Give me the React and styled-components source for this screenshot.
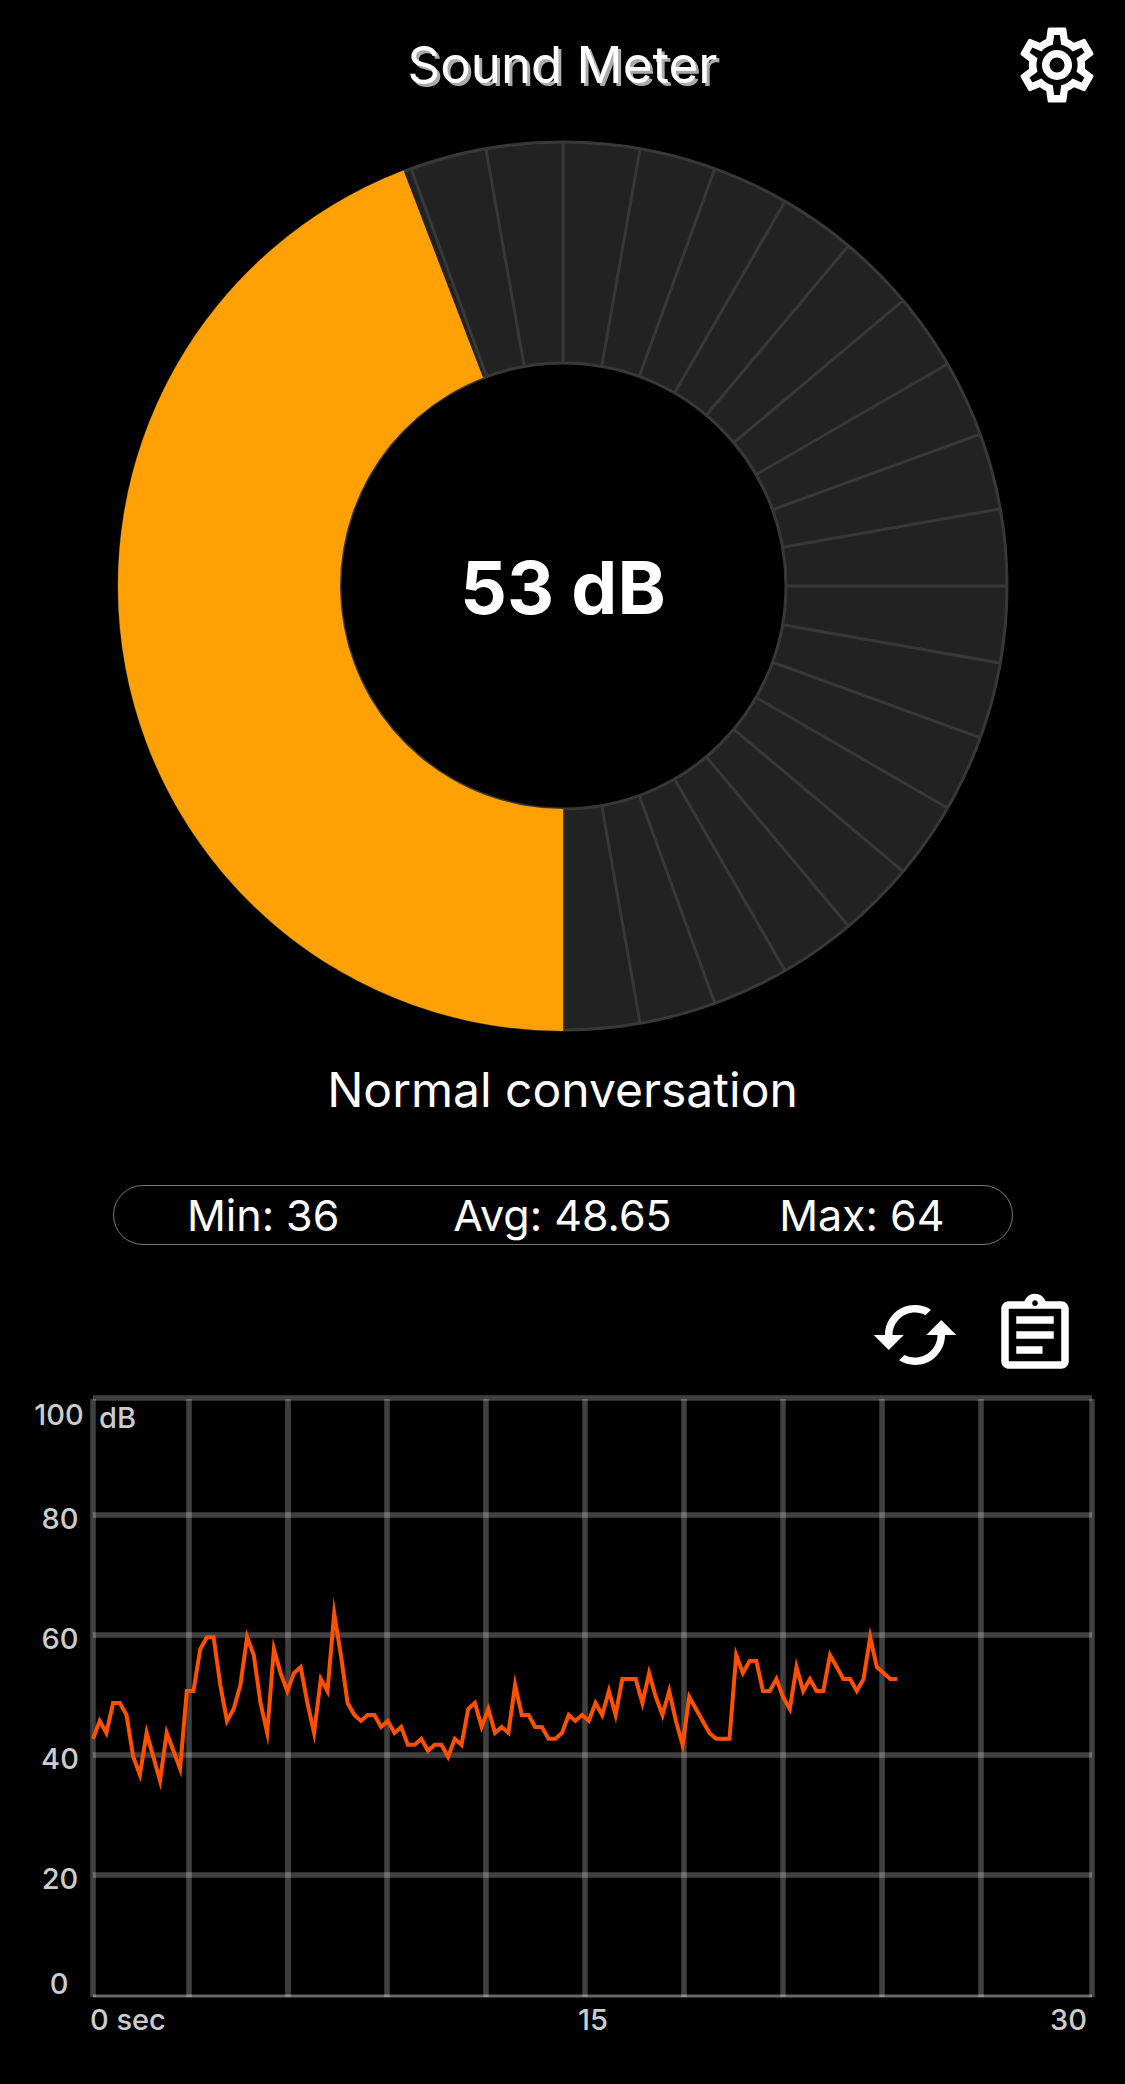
import React from 'react';
import styled, { createGlobalStyle } from 'styled-components';
import { MdCached, MdOutlineAssignment } from 'react-icons/md';

const GlobalStyle = createGlobalStyle`
  body {
    margin: 0;
    background: #000;
    color: #fff;
    font-family: Inter, 'Liberation Sans', sans-serif;
  }
`

const Screen = styled.main`
  display: flex;
  flex-direction: column;
  align-items: center;
`

const Header = styled.header`
  display: grid;
  grid-template-columns: 1fr auto 1fr;
  align-items: center;
  width: 100%;
  box-sizing: border-box;
  padding: 20px 23px 26px;
`

const Title = styled.h1`
  grid-column: 2;
  margin: 0;
  font-size: 51px;
  font-weight: 400;
  line-height: 60px;
  text-shadow: 3px 3px 0 #aaa;
`

const IconButton = styled.button`
  display: block;
  justify-self: end;
  width: 90px;
  height: 90px;
  padding: 0;
  border: none;
  background: none;
  color: #fff;
  cursor: pointer;

  svg {
    display: block;
    width: 100%;
    height: 100%;
  }
`

const GaugeSvg = styled.svg`
  display: block;
  width: 80%;
`

const GaugeValue = styled.text`
  fill: #fff;
  font-size: 73px;
  font-weight: 700;
  text-anchor: middle;
`

const Description = styled.p`
  margin: 24px 0 65px;
  font-size: 48px;
  line-height: 60px;
`

const Stats = styled.ul`
  display: grid;
  grid-template-columns: repeat(3, 1fr);
  width: 80%;
  box-sizing: border-box;
  margin: 0;
  padding: 0;
  border: 1px solid #777;
  border-radius: 30px;
  list-style: none;
`

const Stat = styled.li`
  font-size: 43px;
  line-height: 58px;
  text-align: center;
`

const Toolbar = styled.div`
  display: flex;
  align-self: flex-end;
  gap: 30px;
  padding: 45px 45px 0;
`

const ChartSvg = styled.svg`
  display: block;
  width: 100%;
`

const ChartLabel = styled.text`
  fill: #ccc;
  font-size: 29px;
  font-weight: 500;
  text-anchor: ${props => props.$anchor || 'middle'};
`

const MAX_DB = 120;
const CENTER = 450;
const OUTER = 445;
const INNER = 223;

// angle in degrees, clockwise from the top
const polar = (radius, angle) => {
  const rad = angle * Math.PI / 180;
  return [CENTER + radius * Math.sin(rad), CENTER - radius * Math.cos(rad)];
}

function Gauge({ value }) {
  const end = 180 + value / MAX_DB * 360;
  const large = end - 180 > 180 ? 1 : 0;
  const spokes = Array.from({ length: 36 }, (_, i) => i * 10);

  return (
    <GaugeSvg viewBox="0 0 900 900" role="img" aria-label={`${value} dB`}>
      <circle cx={CENTER} cy={CENTER} r={(OUTER + INNER) / 2} fill="none" stroke="#222" strokeWidth={OUTER - INNER} />
      <g fill="none" stroke="#383838" strokeWidth="3">
        <circle cx={CENTER} cy={CENTER} r={OUTER - 1} />
        <circle cx={CENTER} cy={CENTER} r={INNER} />
        {spokes.map(angle => {
          const [x1, y1] = polar(INNER, angle);
          const [x2, y2] = polar(OUTER, angle);
          return <line key={angle} x1={x1} y1={y1} x2={x2} y2={y2} />;
        })}
      </g>
      <path
        fill="#ffa004"
        d={`M${polar(OUTER, 180)} A${OUTER} ${OUTER} 0 ${large} 1 ${polar(OUTER, end)}
          L${polar(INNER, end)} A${INNER} ${INNER} 0 ${large} 0 ${polar(INNER, 180)} Z`}
      />
      <GaugeValue x={CENTER} y="478">{value} dB</GaugeValue>
    </GaugeSvg>
  )
}

// one reading every 0.2 s
const readings = [
  43, 46, 44, 49, 49, 47, 40, 37, 44, 40, 36, 44, 41, 38, 51, 51, 58, 60, 60, 52,
  46, 48, 52, 60, 57, 49, 44, 58, 54, 51, 54, 55, 49, 44, 53, 51, 64, 57, 49, 47,
  46, 47, 47, 45, 46, 44, 45, 42, 42, 43, 41, 42, 42, 40, 43, 42, 48, 49, 45, 48,
  44, 45, 44, 52, 47, 47, 45, 45, 43, 43, 44, 47, 46, 47, 46, 49, 47, 51, 47, 53,
  53, 53, 49, 54, 50, 47, 51, 46, 42, 50, 48, 46, 44, 43, 43, 43, 57, 54, 56, 56,
  51, 51, 53, 50, 48, 55, 51, 53, 51, 51, 57, 55, 53, 53, 51, 53, 60, 55, 54, 53,
  53
];

const LEFT = 93;
const RIGHT = 1092;
const TOP = 18;
const BOTTOM = 616;
const columns = [93, 189, 288, 387, 486, 585, 684, 783, 882, 981, 1092];
const rows = [135, 255, 375, 495];
const yLabels = [
  { text: '100', x: 59, y: 45 },
  { text: '80', x: 60, y: 149 },
  { text: '60', x: 60, y: 269 },
  { text: '40', x: 60, y: 389 },
  { text: '20', x: 60, y: 509 },
  { text: '0', x: 59, y: 614 }
];

function Chart() {
  const points = readings
    .map((db, i) => `${LEFT + i * 6.7},${BOTTOM - db * (BOTTOM - TOP) / 100}`)
    .join(' ');

  return (
    <ChartSvg viewBox="0 0 1125 704" role="img" aria-label="Sound level over time">
      <g stroke="#fff" strokeOpacity="0.25" strokeWidth="5.5">
        {columns.map(x => <line key={x} x1={x} y1={TOP + 1} x2={x} y2={BOTTOM + 1} />)}
        {rows.map(y => <line key={y} x1={LEFT} y1={y} x2={RIGHT} y2={y} />)}
        <line x1={LEFT} y1={TOP} x2={RIGHT} y2={TOP} />
        <line x1={LEFT} y1={BOTTOM} x2={RIGHT} y2={BOTTOM} strokeOpacity="0.4" strokeWidth="3" />
      </g>
      <polyline points={points} fill="none" stroke="#ff5000" strokeWidth="4" strokeMiterlimit="20" />
      {yLabels.map(label => (
        <ChartLabel key={label.text} x={label.x} y={label.y}>{label.text}</ChartLabel>
      ))}
      <ChartLabel x="99" y="48" $anchor="start">dB</ChartLabel>
      <ChartLabel x="90" y="650" $anchor="start">0 sec</ChartLabel>
      <ChartLabel x="593" y="650">15</ChartLabel>
      <ChartLabel x="1087" y="650" $anchor="end">30</ChartLabel>
    </ChartSvg>
  )
}

function CogIcon() {
  return (
    <svg viewBox="0 0 24 24" fill="currentColor" aria-hidden="true">
      <path d="M12,8A4,4 0 0,1 16,12A4,4 0 0,1 12,16A4,4 0 0,1 8,12A4,4 0 0,1 12,8M12,10A2,2 0 0,0 10,12A2,2 0 0,0 12,14A2,2 0 0,0 14,12A2,2 0 0,0 12,10M10,22C9.75,22 9.54,21.82 9.5,21.58L9.13,18.93C8.5,18.68 7.96,18.34 7.44,17.94L4.95,18.95C4.73,19.03 4.46,18.95 4.34,18.73L2.34,15.27C2.21,15.05 2.27,14.78 2.46,14.63L4.57,12.97L4.5,12L4.57,11L2.46,9.37C2.27,9.22 2.21,8.95 2.34,8.73L4.34,5.27C4.46,5.05 4.73,4.96 4.95,5.05L7.44,6.05C7.96,5.66 8.5,5.32 9.13,5.07L9.5,2.42C9.54,2.18 9.75,2 10,2H14C14.25,2 14.46,2.18 14.5,2.42L14.87,5.07C15.5,5.32 16.04,5.66 16.56,6.05L19.05,5.05C19.27,4.96 19.54,5.05 19.66,5.27L21.66,8.73C21.79,8.95 21.73,9.22 21.54,9.37L19.43,11L19.5,12L19.43,13L21.54,14.63C21.73,14.78 21.79,15.05 21.66,15.27L19.66,18.73C19.54,18.95 19.27,19.04 19.05,18.95L16.56,17.95C16.04,18.34 15.5,18.68 14.87,18.93L14.5,21.58C14.46,21.82 14.25,22 14,22H10M11.25,4L10.88,6.61C9.68,6.86 8.62,7.5 7.85,8.39L5.44,7.35L4.69,8.65L6.8,10.2C6.4,11.37 6.4,12.64 6.8,13.8L4.68,15.36L5.43,16.66L7.86,15.62C8.63,16.5 9.68,17.14 10.87,17.38L11.24,20H12.76L13.13,17.39C14.32,17.14 15.37,16.5 16.14,15.62L18.57,16.66L19.32,15.36L17.2,13.81C17.6,12.64 17.6,11.37 17.2,10.2L19.31,8.65L18.56,7.35L16.15,8.39C15.38,7.5 14.32,6.86 13.12,6.62L12.75,4H11.25Z" />
    </svg>
  )
}

export default function App() {
  return (
    <Screen>
      <GlobalStyle />
      <Header>
        <Title>Sound Meter</Title>
        <IconButton aria-label="Settings"><CogIcon /></IconButton>
      </Header>
      <Gauge value={53} />
      <Description>Normal conversation</Description>
      <Stats>
        <Stat>Min: 36</Stat>
        <Stat>Avg: 48.65</Stat>
        <Stat>Max: 64</Stat>
      </Stats>
      <Toolbar>
        <IconButton aria-label="Reset"><MdCached /></IconButton>
        <IconButton aria-label="History"><MdOutlineAssignment /></IconButton>
      </Toolbar>
      <Chart />
    </Screen>
  )
}
